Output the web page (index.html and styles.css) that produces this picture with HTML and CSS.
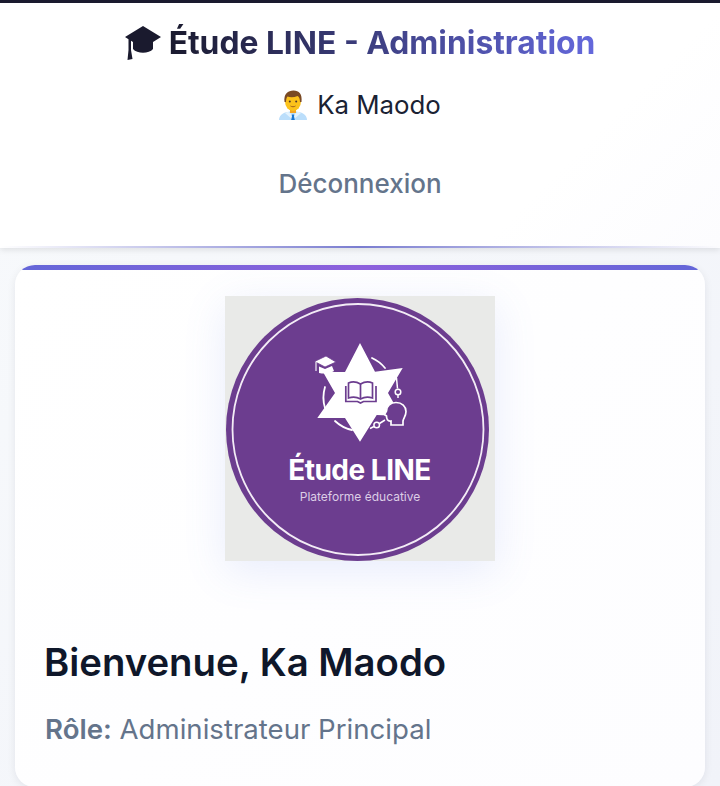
FILE: index.html
```html
<!DOCTYPE html>
<html lang="fr">
<head>
    <meta charset="UTF-8">
    <title>Étude LINE - Administration</title>
    <link rel="stylesheet" href="styles.css">
</head>
<body>
<header class="topbar">
    <h1 class="brand">
        <svg class="brand-cap" viewBox="0 0 36 34" width="36" height="34" aria-hidden="true">
            <path fill="#1a1a2e" d="M18 0 L36 11 L28 16 L28 23 C24 28 12 28 8 23 L8 16 L6 14.800 L6 24 L7.500 33 L2.500 34 L3.500 24 L3.500 13.300 L0 11 Z"/>
        </svg>
        <span class="brand-text">Étude LINE - Administration</span>
    </h1>
    <div class="user">
        <svg class="user-face" viewBox="0 0 28 30" width="28" height="30" aria-hidden="true">
            <path fill="#bbdefb" d="M0 30 C0 24 6 21.500 14 21.500 C22 21.500 28 24 28 30 Z"/>
            <path fill="#e3f2fd" d="M9 21.800 L14 25 L19 21.800 L22 23 L14 30 L6 23 Z"/>
            <rect fill="#f5a623" x="11" y="18" width="6" height="5"/>
            <path fill="#1976d2" d="M12.600 24.500 L15.400 24.500 L15 26.200 L15.800 30 L12.200 30 L13 26.200 Z"/>
            <ellipse fill="#fcc21b" cx="14" cy="11.500" rx="8" ry="9.500"/>
            <path fill="#7a4a24" d="M5.500 12 C4.500 4 9 0.500 14.500 0.500 C20 0.500 23.500 4 22.500 12 L21 12 C21 8.500 20 6.500 18.500 6 C15 7.500 11 7.500 8.500 6.500 C7.500 7.500 7 9.500 7 12 Z"/>
            <circle fill="#4e342e" cx="10.800" cy="11.500" r="1"/>
            <circle fill="#4e342e" cx="17.200" cy="11.500" r="1"/>
            <path fill="none" stroke="#a1621c" stroke-width="1" d="M11.500 16 C13 17 15 17 16.500 16"/>
        </svg>
        <span>Ka Maodo</span>
    </div>
    <a class="logout" href="#">Déconnexion</a>
</header>

<main class="content">
    <section class="welcome-card">
        <div class="logo-wrap">
            <svg class="logo" viewBox="0 0 270 265" width="270" height="265" role="img" aria-label="Étude LINE">
                <rect width="270" height="265" fill="#e9eae8"/>
                <circle cx="132.500" cy="133.500" r="131.500" fill="#6c3d8f"/>
                <circle cx="133" cy="133.500" r="125.500" fill="none" stroke="#f3ecf6" stroke-width="1.800"/>
                <!-- orbit pieces -->
                <g fill="none" stroke="#fff" stroke-width="1.800" stroke-linecap="round">
                    <path d="M147 62 A36 36 0 0 1 160 72"/>
                    <path d="M100 91 A36 36 0 0 0 100 112"/>
                    <path d="M110 125 A36 36 0 0 0 127 134"/>
                </g>
                <path fill="#fff" d="M135 47 L150 75.700 L177.700 72 L163 97 L176 120 L151.700 119 L135 145.700 L120 122 L92.300 122 L110 97 L98 76 L120 76 Z"/>
                <!-- book -->
                <g fill="none" stroke="#6c3d8f" stroke-width="1.700">
                    <path d="M123.500 87 C127 85.500 132 86 135.500 88 C139 86 144 85.500 147.500 87 L147.500 102 C143 100.500 139 101 135.500 103 C132 101 128 100.500 123.500 102 Z"/>
                    <path d="M135.500 88 L135.500 103"/>
                    <path d="M120.800 90 L120.800 105.500 L132.500 105.500 L135.500 107 L138.500 105.500 L151 105.500 L151 90"/>
                </g>
                <!-- hat -->
                <path fill="#fff" stroke="#6c3d8f" stroke-width=".8" d="M101 60 L111 66 L100 71 L89.500 65.500 Z"/>
                <path fill="#fff" d="M94 70.500 L100 73 L107 70 L109 75 C104 78 99 78 94 77 Z"/>
                <path fill="none" stroke="#fff" stroke-width="1.100" d="M91 66 L91 75"/>
                <!-- head -->
                <path fill="#6c3d8f" stroke="#fff" stroke-width="1.700" d="M166 129 L166 125 C162.500 125.500 161.500 123 161.500 120 L159.500 118.500 L161.500 115 C161.500 110 165.500 106.500 171 106.500 C177 106.500 181 110.500 181 115.500 C181 120 178.500 122 178 125 L178 129 Z"/>
                <!-- small nodes -->
                <g fill="none" stroke="#fff" stroke-width="1.500">
                    <path d="M171.500 82 L172.500 92.500 M173 99 L173 102"/>
                    <circle cx="173" cy="96" r="2.800"/>
                    <path d="M145 132.500 L149 130.500 M154.500 127.500 L160 124"/>
                    <circle cx="151.700" cy="129" r="2.800"/>
                </g>
                <text class="logo-title" x="134.500" y="183.500" text-anchor="middle">Étude LINE</text>
                <text class="logo-sub" x="135" y="205" text-anchor="middle">Plateforme éducative</text>
            </svg>
        </div>
        <h2 class="welcome-title">Bienvenue, Ka Maodo</h2>
        <p class="role"><strong>Rôle:</strong> Administrateur Principal</p>
    </section>
</main>
</body>
</html>
```

FILE: styles.css
```css
* {
    margin: 0;
    padding: 0;
    box-sizing: border-box;
}

body {
    background: linear-gradient(135deg, #f8fafc, #f1f3f9);
    font-family: "Inter", "Liberation Sans", sans-serif;
    color: #0f172a;
    overflow: hidden;
    height: 786px;
}

.topbar {
    height: 248px;
    background: linear-gradient(135deg, #fff 75%, #fcfcfe);
    border-top: 3px solid #1a1a2e;
    box-shadow: 0 2px 6px rgba(0, 0, 0, 0.1);
    position: relative;
    display: flex;
    flex-direction: column;
    align-items: center;
    padding-top: 20px;
}

.topbar::after {
    content: "";
    position: absolute;
    left: 0;
    right: 0;
    bottom: 0;
    height: 2px;
    background: linear-gradient(90deg, transparent, #6366c8, transparent);
    opacity: 0.85;
}

.brand {
    display: flex;
    align-items: center;
    gap: 8px;
    font-size: 31.800px;
    font-weight: 700;
    line-height: 40px;
}

.brand-text {
    background: linear-gradient(90deg, #1a1a2e, #6468dc);
    -webkit-background-clip: text;
    background-clip: text;
    color: transparent;
}

.user {
    display: flex;
    align-items: center;
    gap: 10px;
    margin-top: 27px;
    font-size: 25.800px;
    line-height: 30px;
    color: #1a2233;
}

.logout {
    margin-top: 49px;
    font-size: 26px;
    line-height: 30px;
    font-weight: 500;
    color: #64748b;
    text-decoration: none;
}

.content {
    padding: 17px 15px 0;
}

.welcome-card {
    background: linear-gradient(135deg, #fff, #fdfdff);
    border-radius: 20px;
    box-shadow: 0 2px 8px rgba(15, 23, 42, 0.08);
    padding: 31px 30px 42px;
    position: relative;
    overflow: hidden;
}

.welcome-card::before {
    content: "";
    position: absolute;
    top: 0;
    left: 0;
    right: 0;
    height: 5px;
    background: linear-gradient(90deg, #6366d8, #8d60dc 50%, #6366d8);
}

.logo-wrap {
    display: flex;
    justify-content: center;
}

.logo {
    display: block;
    box-shadow: 0 10px 40px rgba(102, 126, 234, 0.14);
}

.logo-title {
    font-size: 28px;
    font-weight: 700;
    letter-spacing: -0.5px;
    fill: #fff;
}

.logo-sub {
    font-size: 12px;
    fill: #dccde6;
}

.welcome-title {
    margin-top: 77px;
    margin-left: -1px;
    font-size: 38.300px;
    line-height: 48px;
    font-weight: 600;
    color: #0f172a;
}

.role {
    margin-top: 27px;
    font-size: 27.600px;
    line-height: 32px;
    color: #64748b;
}

.role strong {
    font-weight: 600;
}
```
